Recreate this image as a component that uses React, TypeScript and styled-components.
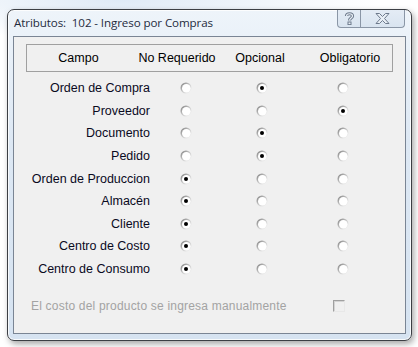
import { Fragment } from "react";
import styled, { createGlobalStyle } from "styled-components";

const GlobalStyle = createGlobalStyle`
  html, body {
    margin: 0;
    padding: 0;
  }
  body {
    font-family: "Liberation Sans", Arial, sans-serif;
  }
`;

const Desktop = styled.div`
  width: 418px;
  height: 347px;
  box-sizing: border-box;
  padding: 9px 6px 0 7px;
  background: radial-gradient(ellipse 260px 40px at 120px 0px, #dfeaf6 0%, #ffffff 100%);
  overflow: hidden;
`;

const Window = styled.div`
  width: 405px;
  height: 332px;
  box-sizing: border-box;
  border: 1px solid #3c3f44;
  border-radius: 7px;
  background: linear-gradient(180deg, #eef4fa 0%, #dde8f4 40%, #d6e3f1 100%);
  box-shadow: 2px 3px 6px rgba(0, 0, 0, 0.35), inset 0 0 0 1px rgba(255, 255, 255, 0.8);
  display: flex;
  flex-direction: column;
`;

const TitleBar = styled.div`
  height: 26px;
  display: flex;
  align-items: flex-start;
  padding-left: 6px;
`;

const Title = styled.span`
  font-family: "Open Sans", "Noto Sans", sans-serif;
  font-size: 11.6px;
  color: #1f2b3d;
  margin-top: 5px;
  flex: 1;
  letter-spacing: -0.1px;
`;

const Caption = styled.div`
  display: flex;
  margin-right: 6px;
  border: 1px solid #8a96a6;
  border-top: none;
  border-radius: 0 0 4px 4px;
  height: 17px;
  background: linear-gradient(180deg, #e4ecf5, #d9e4f0);
`;

const CaptionButton = styled.div<{ $w: number }>`
  width: ${(p) => p.$w}px;
  display: flex;
  align-items: center;
  justify-content: center;
  & + & {
    border-left: 1px solid #8a96a6;
  }
`;

const Client = styled.div`
  flex: 1;
  margin: 0 5px 6px 5px;
  border: 1px solid #7a8594;
  background: #f0f0f0;
  padding: 7px 0 0 12px;
  display: flex;
  flex-direction: column;
`;

const HeaderBox = styled.div`
  width: 367px;
  height: 28px;
  box-sizing: border-box;
  border: 1px solid #a0a0a0;
  display: grid;
  grid-template-columns: 103px 94px 72px 96px;
  align-items: center;
  font-size: 12.5px;
  color: #000;
`;

const HeaderCell = styled.span<{ $pad?: number }>`
  text-align: center;
  padding-left: ${(p) => p.$pad ?? 0}px;
`;

const Rows = styled.div`
  margin-top: 5px;
  margin-left: -12px;
  display: grid;
  grid-template-columns: 137px 70px 82px 80px;
  grid-auto-rows: 22.6px;
  align-items: center;
`;

const Label = styled.span`
  text-align: right;
  font-size: 12.5px;
  color: #0a0a1e;
  padding-right: 1px;
`;

const RadioCell = styled.span`
  display: flex;
  justify-content: center;
`;

const Footer = styled.div`
  margin-top: 19px;
  margin-left: 5px;
  display: flex;
  align-items: center;
`;

const FooterText = styled.span`
  font-size: 12px;
  color: #a3a3a3;
  letter-spacing: 0.2px;
  width: 302px;
`;

const CheckBox = styled.span`
  width: 10px;
  height: 10px;
  border: 1px solid;
  border-color: #a0a0a0 #e8e8e8 #e8e8e8 #a0a0a0;
  box-shadow: inset 1px 1px 0 #d4d4d4;
  background: #f0f0f0;
`;

const Radio = ({ on }: { on: boolean }) => (
  <svg width="12" height="12" viewBox="0 0 12 12">
    <defs>
      <linearGradient id="rg" x1="0" y1="0" x2="1" y2="1">
        <stop offset="0" stopColor="#7a7a7a" />
        <stop offset="0.5" stopColor="#c8c8c8" />
        <stop offset="1" stopColor="#ffffff" />
      </linearGradient>
    </defs>
    <circle cx="6" cy="6" r="5.5" fill="url(#rg)" />
    <circle cx="6.3" cy="6.3" r="4.3" fill="#ffffff" />
    {on && <circle cx="6" cy="6" r="2" fill="#000" />}
  </svg>
);

const HelpIcon = () => (
  <svg width="11" height="13" viewBox="0 0 11 13">
    <path d="M2.5 4 C2.5 1 8.5 1 8.5 4 C8.5 6 5.5 6 5.5 8.5" fill="none" stroke="#6d7a8c" strokeWidth="3.2" />
    <path d="M2.5 4 C2.5 1 8.5 1 8.5 4 C8.5 6 5.5 6 5.5 8.5" fill="none" stroke="#e9eff6" strokeWidth="1.2" />
    <rect x="4" y="10" width="3" height="2.6" fill="#e9eff6" stroke="#6d7a8c" strokeWidth="1" />
  </svg>
);

const CloseIcon = () => (
  <svg width="15" height="11" viewBox="0 0 15 11">
    <path
      d="M1 0.5 H4.5 L7.5 3.5 L10.5 0.5 H14 L9.5 5.5 L14 10.5 H10.5 L7.5 7.5 L4.5 10.5 H1 L5.5 5.5 Z"
      fill="#e9eff6"
      stroke="#6d7a8c"
      strokeWidth="1"
      strokeLinejoin="round"
    />
  </svg>
);

const rows: { name: string; value: number }[] = [
  { name: "Orden de Compra", value: 1 },
  { name: "Proveedor", value: 2 },
  { name: "Documento", value: 1 },
  { name: "Pedido", value: 1 },
  { name: "Orden de Produccion", value: 0 },
  { name: "Almacén", value: 0 },
  { name: "Cliente", value: 0 },
  { name: "Centro de Costo", value: 0 },
  { name: "Centro de Consumo", value: 0 },
];

export default function App() {
  return (
    <>
      <GlobalStyle />
      <Desktop>
        <Window>
          <TitleBar>
            <Title>Atributos:&nbsp; 102 - Ingreso por Compras</Title>
            <Caption>
              <CaptionButton $w={22}>
                <HelpIcon />
              </CaptionButton>
              <CaptionButton $w={43}>
                <CloseIcon />
              </CaptionButton>
            </Caption>
          </TitleBar>
          <Client>
            <HeaderBox>
              <HeaderCell>Campo</HeaderCell>
              <HeaderCell>No Requerido</HeaderCell>
              <HeaderCell>Opcional</HeaderCell>
              <HeaderCell $pad={12}>Obligatorio</HeaderCell>
            </HeaderBox>
            <Rows>
              {rows.map((r) => (
                <Fragment key={r.name}>
                  <Label>{r.name}</Label>
                  {[0, 1, 2].map((i) => (
                    <RadioCell key={i}>
                      <Radio on={r.value === i} />
                    </RadioCell>
                  ))}
                </Fragment>
              ))}
            </Rows>
            <Footer>
              <FooterText>El costo del producto se ingresa manualmente</FooterText>
              <CheckBox />
            </Footer>
          </Client>
        </Window>
      </Desktop>
    </>
  );
}
